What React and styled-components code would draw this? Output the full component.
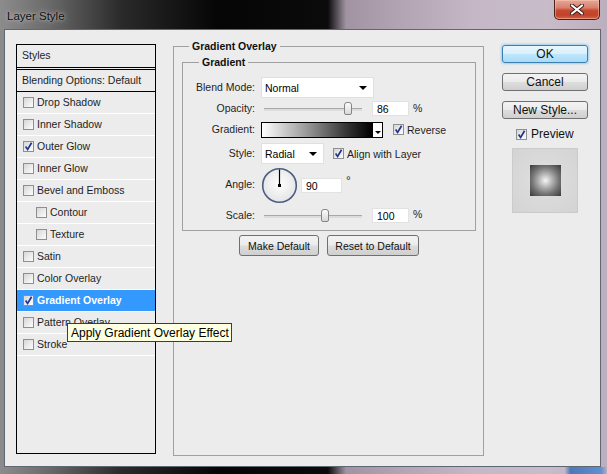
import React from "react";
import styled, { createGlobalStyle } from "styled-components";

const GlobalStyle = createGlobalStyle`
  html, body {
    margin: 0;
    padding: 0;
    background: #000;
  }
  * {
    box-sizing: border-box;
  }
`;

const styleItems = [
  { label: "Drop Shadow" },
  { label: "Inner Shadow" },
  { label: "Outer Glow", checked: true },
  { label: "Inner Glow" },
  { label: "Bevel and Emboss" },
  { label: "Contour", indent: true },
  { label: "Texture", indent: true },
  { label: "Satin" },
  { label: "Color Overlay" },
  { label: "Gradient Overlay", checked: true, active: true },
  { label: "Pattern Overlay" },
  { label: "Stroke" },
];

const CheckBox = ({ checked }) => (
  <Box>
    {checked && (
      <svg width="9" height="9" viewBox="0 0 9 9">
        <path d="M1.6 4.6 L3.6 7.4 L7.6 0.8" stroke="#22348e" strokeWidth="1.7" fill="none" />
      </svg>
    )}
  </Box>
);

const Slider = ({ value }) => (
  <Track>
    <Thumb style={{ left: `${value}%` }} />
  </Track>
);

const Dial = () => (
  <svg width="37" height="37" viewBox="0 0 37 37">
    <defs>
      <radialGradient id="dialFill" cx="50%" cy="45%" r="55%">
        <stop offset="0%" stopColor="#ffffff" />
        <stop offset="100%" stopColor="#e4e4e4" />
      </radialGradient>
    </defs>
    <circle cx="18.5" cy="18.5" r="16.8" fill="url(#dialFill)" stroke="#4d5c82" strokeWidth="1.6" />
    <line x1="18.5" y1="18.5" x2="18.5" y2="2.5" stroke="#000" strokeWidth="1.2" />
    <rect x="17" y="17" width="3" height="3" fill="#000" />
  </svg>
);

const App = () => {
  return (
    <>
      <GlobalStyle />
      <Window>
        <TitleBar>
          <Title>Layer Style</Title>
          <CloseButton>
            <svg width="14" height="11" viewBox="0 0 14 11">
              <path d="M2 1.5 L12 9.5 M12 1.5 L2 9.5" stroke="#3a1b14" strokeWidth="4" strokeLinecap="round" />
              <path d="M2 1.5 L12 9.5 M12 1.5 L2 9.5" stroke="#ffffff" strokeWidth="2.2" strokeLinecap="round" />
            </svg>
          </CloseButton>
        </TitleBar>

        <Client>
          <StyleList>
            <ListHeader>Styles</ListHeader>
            <BlendingRow>Blending Options: Default</BlendingRow>
            {styleItems.map((item) => (
              <StyleRow key={item.label} $indent={item.indent} $active={item.active}>
                <CheckBox checked={item.checked} />
                {item.label}
              </StyleRow>
            ))}
          </StyleList>

          <GroupBox>
            <GroupTitle>Gradient Overlay</GroupTitle>
            <InnerGroup>
              <InnerTitle>Gradient</InnerTitle>
              <FormGrid>
                <Label>Blend Mode:</Label>
                <Controls>
                  <Select $w={113}>
                    Normal
                    <Arrow />
                  </Select>
                </Controls>

                <Label>Opacity:</Label>
                <Controls>
                  <Slider value={86} />
                  <Field $w={37} $ml={10}>86</Field>
                  <Unit>%</Unit>
                </Controls>

                <Label>Gradient:</Label>
                <Controls>
                  <Swatch>
                    <SwatchFill />
                    <SwatchArrow>
                      <Arrow $small />
                    </SwatchArrow>
                  </Swatch>
                  <CheckLabel $ml={10}>
                    <CheckBox checked />
                    Reverse
                  </CheckLabel>
                </Controls>

                <Label>Style:</Label>
                <Controls>
                  <Select $w={63}>
                    Radial
                    <Arrow />
                  </Select>
                  <CheckLabel $ml={9}>
                    <CheckBox checked />
                    Align with Layer
                  </CheckLabel>
                </Controls>

                <Label $up>Angle:</Label>
                <Controls>
                  <Dial />
                  <Field $w={41} $ml={3}>90</Field>
                  <Unit $raise>°</Unit>
                </Controls>

                <Label>Scale:</Label>
                <Controls>
                  <Slider value={62} />
                  <Field $w={37} $ml={10}>100</Field>
                  <Unit>%</Unit>
                </Controls>
              </FormGrid>
            </InnerGroup>
            <ButtonRow>
              <Button $w={80}>Make Default</Button>
              <Button $w={92}>Reset to Default</Button>
            </ButtonRow>
          </GroupBox>

          <SideColumn>
            <SideButton $primary>OK</SideButton>
            <SideButton>Cancel</SideButton>
            <SideButton>New Style...</SideButton>
            <PreviewToggle>
              <CheckBox checked />
              Preview
            </PreviewToggle>
            <PreviewBox>
              <PreviewSquare />
            </PreviewBox>
          </SideColumn>
        </Client>
        <BottomFrame />

        <Tooltip>Apply Gradient Overlay Effect</Tooltip>
      </Window>
    </>
  );
};

export default App;

const Window = styled.div`
  position: relative;
  width: 607px;
  height: 474px;
  display: flex;
  flex-direction: column;
  overflow: hidden;
  font-family: "Liberation Sans", Arial, sans-serif;
  font-size: 10.5px;
  color: #1e1e1e;
  background: linear-gradient(
    90deg,
    #8c8c8c 0%,
    #6a6a6a 8%,
    #2a2a2a 20%,
    #050505 36%,
    #0b0b0b 54%,
    #a193a2 57%,
    #b3a4b3 66%,
    #c5b7c6 78%,
    #c9bcc9 90%,
    #bcaebd 100%
  );
`;

const TitleBar = styled.div`
  display: flex;
  align-items: flex-start;
  justify-content: space-between;
  height: 29px;
  padding-right: 7px;
`;

const Title = styled.span`
  margin: 10px 0 0 7px;
  font-size: 11.5px;
  color: #111;
  text-shadow: 0 0 6px rgba(200, 200, 200, 0.9), 0 0 3px rgba(200, 200, 200, 0.8);
`;

const CloseButton = styled.div`
  display: flex;
  align-items: center;
  justify-content: center;
  width: 46px;
  height: 20px;
  border: 1px solid #4a2019;
  border-top: none;
  border-radius: 0 0 5px 5px;
  background: linear-gradient(#e7a797 0%, #d9806f 40%, #c54a30 55%, #c3412a 80%, #d76545 100%);
  box-shadow: inset 0 0 0 1px rgba(255, 210, 190, 0.45);
`;

const Client = styled.div`
  display: flex;
  align-items: flex-start;
  height: 438px;
  margin: 0 6px 0 4px;
  padding: 14px 0 0 11px;
  background: #ececec;
  border: 1px solid #5e6873;
`;

const BottomFrame = styled.div`
  flex: 1;
  background: linear-gradient(
    90deg,
    transparent 0%,
    transparent 93%,
    #4f78b8 94%,
    #5f8fd0 99%,
    transparent 100%
  );
`;

const StyleList = styled.div`
  width: 140px;
  height: 410px;
  flex-shrink: 0;
  border: 1px solid #000;
`;

const ListHeader = styled.div`
  display: flex;
  align-items: center;
  height: 25px;
  padding: 0 0 2px 5px;
  border-bottom: 3px double #000;
`;

const BlendingRow = styled.div`
  display: flex;
  align-items: center;
  height: 22px;
  padding: 0 0 2px 5px;
  border-bottom: 1px solid #000;
`;

const StyleRow = styled.div`
  display: flex;
  align-items: center;
  gap: 3px;
  height: 22px;
  padding: 0 0 1px ${(p) => (p.$indent ? 19 : 6)}px;
  border-bottom: 1px solid #fff;
  background: ${(p) => (p.$active ? "#3399ff" : "transparent")};
  color: ${(p) => (p.$active ? "#fff" : "#1e1e1e")};
  font-weight: ${(p) => (p.$active ? "bold" : "normal")};
`;

const Box = styled.span`
  display: inline-flex;
  align-items: center;
  justify-content: center;
  flex-shrink: 0;
  width: 11px;
  height: 11px;
  border: 1px solid #8e8f8f;
  background: linear-gradient(135deg, #d6d6d6 0%, #f2f2f2 70%, #fbfbfb 100%);
`;

const GroupBox = styled.fieldset`
  flex-shrink: 0;
  width: 311px;
  height: 416px;
  margin: -4px 0 0 17px;
  padding: 3px 7px 0 8px;
  min-width: 0;
  border: 1px solid #a0a0a0;
`;

const GroupTitle = styled.legend`
  margin-left: 7px;
  padding: 0 3px;
  line-height: 13px;
  font-weight: bold;
  color: #111;
`;

const InnerGroup = styled.fieldset`
  width: 294px;
  margin: 0;
  padding: 8px 0 4px 0;
  min-width: 0;
  border: 1px solid #a0a0a0;
`;

const InnerTitle = styled.legend`
  margin-left: 16px;
  padding: 0 3px;
  line-height: 13px;
  font-weight: bold;
  color: #111;
`;

const FormGrid = styled.div`
  display: grid;
  grid-template-columns: 72px 1fr;
  grid-template-rows: 21px 21px 21px 27px 37px 22px;
  column-gap: 6px;
  align-items: center;
`;

const Label = styled.span`
  text-align: right;
  margin-top: ${(p) => (p.$up ? "-4px" : "-1px")};
`;

const Controls = styled.div`
  display: flex;
  align-items: center;
`;

const Select = styled.div`
  display: flex;
  align-items: center;
  justify-content: space-between;
  width: ${(p) => p.$w}px;
  height: 21px;
  padding: 1px 6px 0 3px;
  background: #fff;
  border: 1px solid #e0e0e0;
  color: #000;
`;

const Arrow = styled.span`
  width: 0;
  height: 0;
  border-left: ${(p) => (p.$small ? 3 : 4)}px solid transparent;
  border-right: ${(p) => (p.$small ? 3 : 4)}px solid transparent;
  border-top: ${(p) => (p.$small ? 3 : 4)}px solid #000;
`;

const Track = styled.div`
  position: relative;
  width: 98px;
  height: 13px;
  margin-left: 3px;

  &::before {
    content: "";
    position: absolute;
    left: 0;
    right: 0;
    top: 6px;
    height: 2px;
    border-top: 1px solid #a9a9a9;
    background: #dcdcdc;
  }
`;

const Thumb = styled.span`
  position: absolute;
  top: 0;
  width: 8px;
  height: 13px;
  margin-left: -4px;
  border: 1px solid #858585;
  border-radius: 3px 3px 2px 2px;
  background: linear-gradient(#fdfdfd, #d8d8d8);
`;

const Field = styled.span`
  display: flex;
  align-items: center;
  width: ${(p) => p.$w}px;
  height: 15px;
  margin-left: ${(p) => p.$ml}px;
  padding: 1px 0 0 4px;
  background: #fff;
  border: 1px solid #e2e2e2;
  color: #000;
`;

const Unit = styled.span`
  margin-left: 4px;
  align-self: ${(p) => (p.$raise ? "flex-start" : "center")};
  margin-top: ${(p) => (p.$raise ? "7px" : "-2px")};
  font-size: ${(p) => (p.$raise ? "12px" : "10.5px")};
`;

const Swatch = styled.div`
  display: flex;
  width: 122px;
  height: 16px;
  border: 1px solid #000;
  background: #fff;
`;

const SwatchFill = styled.div`
  flex: 1;
  border-right: 1px solid #000;
  background: linear-gradient(90deg, #ffffff 0%, #9a9a9a 40%, #3a3a3a 75%, #000000 100%);
`;

const SwatchArrow = styled.div`
  display: flex;
  align-items: flex-end;
  justify-content: center;
  width: 9px;
  padding-bottom: 3px;
`;

const CheckLabel = styled.span`
  display: flex;
  align-items: center;
  gap: 3px;
  margin-left: ${(p) => p.$ml}px;
`;

const ButtonRow = styled.div`
  display: flex;
  justify-content: center;
  gap: 8px;
  margin-top: 4px;
`;

const Button = styled.div`
  display: flex;
  align-items: center;
  justify-content: center;
  width: ${(p) => p.$w}px;
  height: 21px;
  border: 1px solid #707070;
  border-radius: 3px;
  background: linear-gradient(#f3f3f3 0%, #ebebeb 48%, #dddddd 52%, #cfcfcf 100%);
  color: #111;
`;

const SideColumn = styled.div`
  display: flex;
  flex-direction: column;
  width: 86px;
  margin: 1px 0 0 18px;
`;

const SideButton = styled.div`
  display: flex;
  align-items: center;
  justify-content: center;
  height: 18px;
  margin-bottom: 10px;
  font-size: 12px;
  color: #111;
  border: 1px solid ${(p) => (p.$primary ? "#3c7fb1" : "#707070")};
  border-radius: 3px;
  background: ${(p) =>
    p.$primary
      ? "linear-gradient(#e9f6fd 0%, #d9f0fc 48%, #bee6fd 52%, #a9dbf6 100%)"
      : "linear-gradient(#f3f3f3 0%, #ebebeb 48%, #dddddd 52%, #cfcfcf 100%)"};
  box-shadow: ${(p) => (p.$primary ? "0 0 2px 1px rgba(80, 180, 240, 0.5)" : "none")};
`;

const PreviewToggle = styled.div`
  display: flex;
  align-items: center;
  gap: 4px;
  margin: -1px 0 0 14px;
  height: 12px;
  font-size: 12px;
  color: #111;
`;

const PreviewBox = styled.div`
  display: flex;
  align-items: center;
  justify-content: center;
  width: 66px;
  height: 65px;
  margin: 8px 0 0 10px;
  border: 1px solid #cbcbcb;
  background: radial-gradient(circle, #e6e6e6 0%, #dadada 45%, #d3d3d3 100%);
`;

const PreviewSquare = styled.div`
  width: 31px;
  height: 31px;
  background: radial-gradient(circle, #f6f6f6 0%, #b9b9b9 28%, #747474 62%, #3a3a3a 100%);
`;

const Tooltip = styled.div`
  position: absolute;
  left: 67px;
  top: 323px;
  width: 165px;
  height: 19px;
  display: flex;
  align-items: center;
  padding-left: 3px;
  background: #ffffe1;
  border: 1px solid #3c3c3c;
  font-size: 12px;
  color: #000;
`;
